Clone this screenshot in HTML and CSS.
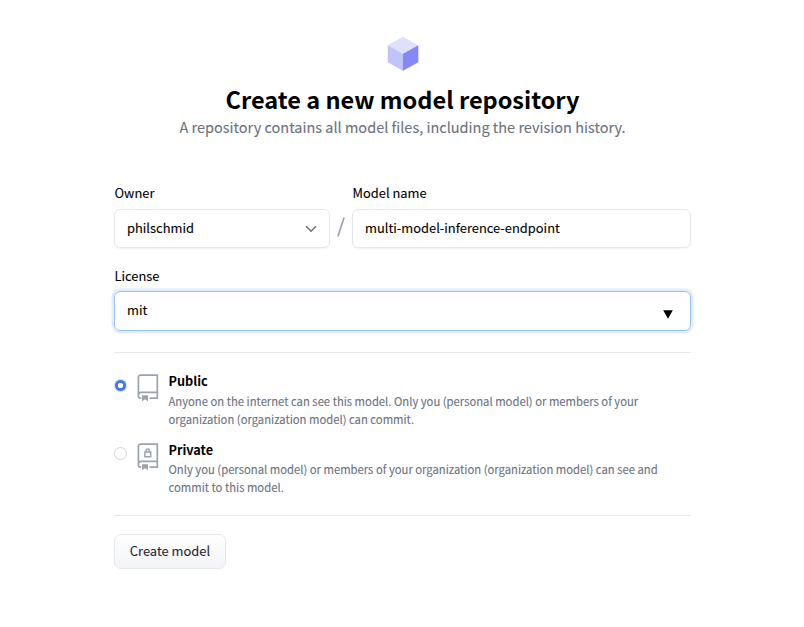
FILE: index.html
```
<!DOCTYPE html>
<html lang="en">
<head>
<meta charset="utf-8">
<title>Create a new model repository</title>
<link rel="stylesheet" href="styles.css">
</head>
<body>
<main class="page">
  <header class="intro">
    <svg class="cube" viewBox="0 0 32 36" width="32" height="36">
      <path fill="#dfe0fd" d="M16 .8 31.3 9.2 16 17.8.7 9.2Z"/>
      <path fill="#c1c4fb" d="M.7 9.2 16 17.8V34.8L.7 26.3Z"/>
      <path fill="#8487f4" d="M31.3 9.2 16 17.8V34.8l15.3-8.5Z"/>
    </svg>
    <h1 class="title">Create a new model repository</h1>
    <p class="subtitle">A repository contains all model files, including the revision history.</p>
  </header>
  <form class="form">
    <div class="row">
      <div class="field owner">
        <span class="label">Owner</span>
        <div class="control"><span>philschmid</span>
          <svg class="chevron" width="12" height="8" viewBox="0 0 12 8"><path d="M1 1.2 6 6.2 11 1.2" fill="none" stroke="#6b7280" stroke-width="1.6"/></svg>
        </div>
      </div>
      <svg class="slash" width="8" height="20" viewBox="0 0 8 20"><path d="M.9 19.5 7.1.5" stroke="#9ca3af" stroke-width="1.7"/></svg>
      <div class="field name">
        <span class="label">Model name</span>
        <div class="control"><span>multi-model-inference-endpoint</span></div>
      </div>
    </div>
    <div class="field license">
      <span class="label">License</span>
      <div class="control focused"><span>mit</span>
        <svg class="triangle" width="10" height="9" viewBox="0 0 10 9"><path d="M.2.2H9.8L5 8.8Z"/></svg>
      </div>
    </div>
    <div class="choices">
      <label class="choice">
        <span class="radio checked"></span>
        <svg class="book" width="22" height="28" viewBox="0 0 22 28">
          <path d="M4.2 24.2H3.4Q1.4 24.2 1.4 22V3.5Q1.4 1.2 3.6 1.2H20.3V24.2H12.5M1.4 20.5Q1.8 18.3 4 18.3H20.3" fill="none" stroke="#9ca3af" stroke-width="1.7"/>
          <path d="M5 21.3h6v6l-3-2-3 2Z" fill="#9ca3af"/>
        </svg>
        <span class="text"><b>Public</b><span class="desc">Anyone on the internet can see this model. Only you (personal model) or members of your<br>organization (organization model) can commit.</span></span>
      </label>
      <label class="choice private">
        <span class="radio"></span>
        <svg class="book" width="22" height="28" viewBox="0 0 22 28">
          <path d="M4.2 24.2H3.4Q1.4 24.2 1.4 22V3.5Q1.4 1.2 3.6 1.2H20.3V24.2H12.5M1.4 20.5Q1.8 18.3 4 18.3H20.3" fill="none" stroke="#9ca3af" stroke-width="1.7"/>
          <path d="M5 21.3h6v6l-3-2-3 2Z" fill="#9ca3af"/>
          <path d="M7.9 8.9h5.8v4.8H7.9ZM9.2 9V7.4Q9.3 6 10.8 6T12.4 7.4V9" fill="none" stroke="#9ca3af" stroke-width="1.5"/>
        </svg>
        <span class="text"><b>Private</b><span class="desc">Only you (personal model) or members of your organization (organization model) can see and<br>commit to this model.</span></span>
      </label>
    </div>
    <button class="submit" type="button">Create model</button>
  </form>
</main>
</body>
</html>
```
FILE: styles.css
```
* { box-sizing: border-box; }
body { margin: 0; background: #fff; color: #000; font-family: "Noto Sans CJK SC", "Noto Sans", sans-serif; font-size: 12.9px; -webkit-text-stroke: .1px; }
.page { width: 577px; margin: 0 0 0 114px; padding-top: 36px; }
.intro { text-align: center; display: flex; flex-direction: column; align-items: center; }
.cube { display: block; }
.title { margin: 12px 0 0; font-size: 23.55px; line-height: 30px; font-weight: 700; white-space: nowrap; -webkit-text-stroke: 0; }
.subtitle { margin: 1px 0 0; font-size: 14.5px; line-height: 24px; color: #6b7280; white-space: nowrap; }
.form { margin-top: 45px; }
.row { display: flex; align-items: flex-end; }
.label { display: block; line-height: 18px; margin-bottom: 7px; padding-left: .5px; }
.owner { width: 216px; }
.name { width: 339px; }
.slash { margin: 0 7px 11px; }
.control { height: 39px; display: flex; align-items: center; justify-content: space-between; padding: 0 12px 2px; border: 1px solid #e5e7eb; border-radius: 6px; box-shadow: 0 1px 2px rgba(0,0,0,.05); line-height: 18px; }
.chevron { margin-top: 2px; }
.license { margin-top: 19px; }
.license .label { margin-bottom: 6px; }
.focused { height: 40px; border-color: #93c1fb; box-shadow: 0 0 0 2.5px #e2edfd; }
.triangle { margin: 8px 5px 0 0; }
.choices { margin-top: 21px; padding: 19px 0 18px; border: solid #e5e7eb; border-width: 1px 0; display: flex; flex-direction: column; gap: 14px; height: 164px; }
.choice { display: flex; height: 55px; }
.radio { width: 13px; height: 13px; margin: 6.5px 10px 0 0; border: 1px solid #d1d5db; border-radius: 50%; }
.private .radio { margin-top: 6px; }
.checked { border: 1px solid #c6d6f7; background: radial-gradient(circle, #fff 0 2.3px, #4478ee 3px); }
.book { margin: 2px 9.5px 0 0; }
.text b { display: block; font-size: 12.7px; line-height: 18px; -webkit-text-stroke: 0; }
.desc { display: block; margin-top: 2px; font-size: 11.28px; line-height: 18px; color: #6b7280; white-space: nowrap; }
.private .desc { margin-top: 1px; }
.submit { display: block; margin-top: 18px; width: 112px; height: 35px; padding: 0 0 2px; border: 1px solid #e5e7eb; border-radius: 7px; background: linear-gradient(#fff, #f3f4f6); color: #1f2937; font: 12.9px/18px "Noto Sans CJK SC", "Noto Sans", sans-serif; -webkit-text-stroke: .1px; }
```
